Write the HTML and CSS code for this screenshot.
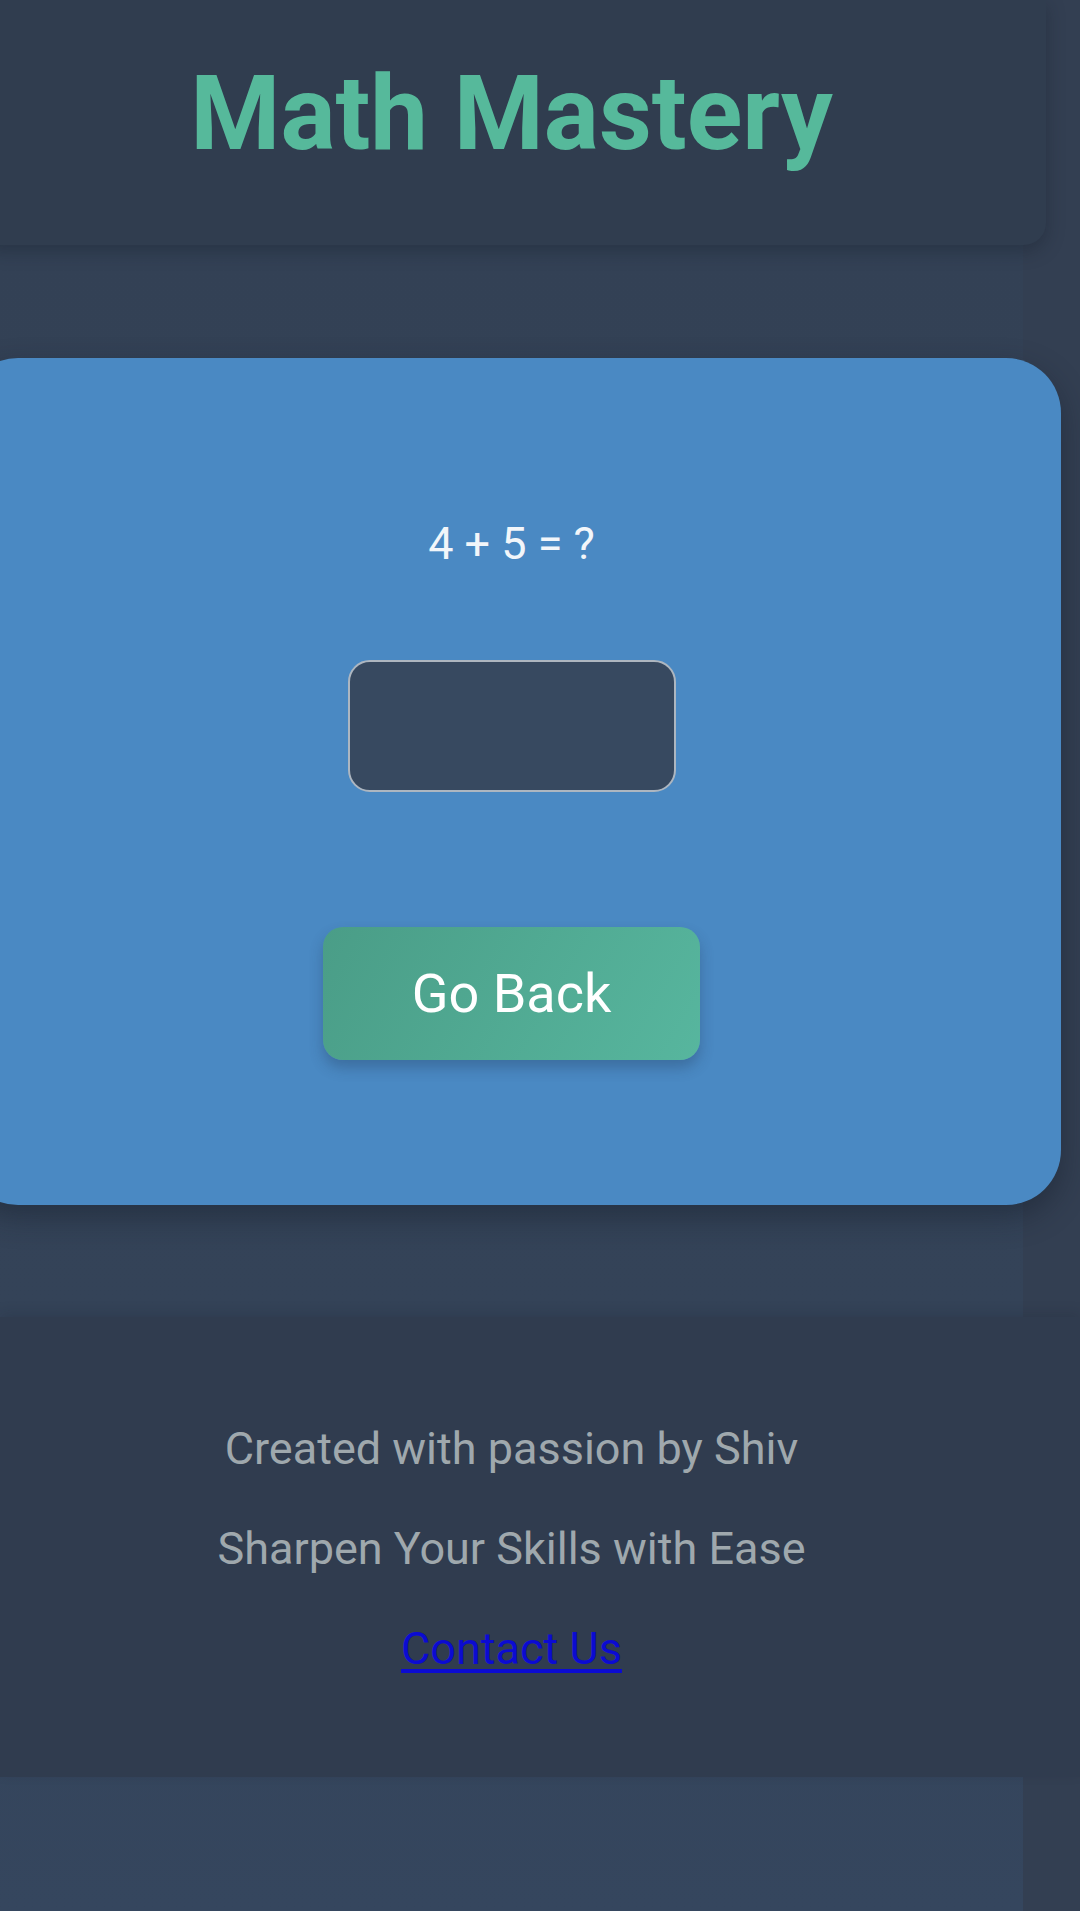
FILE: index.html
```html
<!DOCTYPE html>
<html lang="en">
<head>
<meta charset="utf-8">
<title>Math Mastery</title>
<link rel="stylesheet" href="styles.css">
</head>
<body>
<div class="page">
  <header class="site-header">
    <h1 class="title">Math Mastery</h1>
  </header>
  <main class="main">
    <section class="card">
      <p class="question">4 + 5 = ?</p>
      <input class="answer" type="text" aria-label="Answer">
      <button class="back-btn" type="button">Go Back</button>
    </section>
  </main>
  <footer class="site-footer">
    <p class="foot-line">Created with passion by Shiv</p>
    <p class="foot-line">Sharpen Your Skills with Ease</p>
    <p class="foot-line"><a class="contact" href="#">Contact Us</a></p>
  </footer>
</div>
</body>
</html>
```

FILE: styles.css
```css
html {
  margin: 0;
  background: #333f52;
}
body {
  margin: 0;
  min-height: 1911px;
  overflow: hidden;
  font-family: Roboto, "Liberation Sans", Arial, sans-serif;
  background: #333f52;
}
.page {
  width: 1023px;
  min-height: 1911px;
  display: flex;
  flex-direction: column;
  align-items: center;
  background: linear-gradient(180deg, #303c4e 0%, #334155 60%, #35465e 100%);
}
.site-header {
  width: 1068px;
  flex: none;
  box-sizing: border-box;
  height: 245px;
  padding-top: 53px;
  background: #303d4f;
  border-radius: 0 0 22px 22px;
  box-shadow: 0 6px 18px rgba(20, 28, 40, 0.35);
  text-align: center;
  position: relative;
  z-index: 2;
}
.title {
  margin: 0;
  font-size: 103px;
  line-height: 121px;
  font-weight: 700;
  color: #56b99b;
}
.main {
  width: 1023px;
  flex: none;
  display: flex;
  flex-direction: column;
  align-items: center;
  padding: 113px 0 112px;
  background: linear-gradient(180deg, #334155 0%, #344358 100%);
}
.card {
  width: 1098px;
  flex: none;
  box-sizing: border-box;
  height: 847px;
  padding-top: 159px;
  background: #4a89c3;
  border-radius: 55px;
  box-shadow: 0 12px 30px rgba(20, 28, 42, 0.45);
  display: flex;
  flex-direction: column;
  align-items: center;
}
.question {
  margin: 0;
  font-size: 45px;
  line-height: 53px;
  color: #f2f6fa;
}
.answer {
  margin-top: 90px;
  width: 328px;
  height: 132px;
  box-sizing: border-box;
  border: 2px solid #adb6c0;
  border-radius: 22px;
  background: #374960;
  outline: none;
  font-family: inherit;
  font-size: 45px;
  color: #fff;
  padding: 0 20px;
}
.back-btn {
  margin-top: 135px;
  width: 377px;
  height: 133px;
  border: none;
  border-radius: 20px;
  background: linear-gradient(120deg, #4a9d87 0%, #57b69e 100%);
  box-shadow: 0 8px 14px rgba(30, 50, 80, 0.3);
  color: #ffffff;
  font-family: inherit;
  font-size: 54px;
  cursor: pointer;
}
.site-footer {
  align-self: flex-start;
  width: 1080px;
  flex: none;
  box-sizing: border-box;
  height: 460px;
  padding: 59px 57px 0 0;
  background: #303c4f;
  text-align: center;
  box-shadow: 0 -4px 12px rgba(20, 28, 40, 0.15);
}
.foot-line {
  margin: 45px 0;
  font-size: 45px;
  line-height: 55px;
  color: #9fa8ad;
}
.contact {
  color: #0b0bd2;
  text-decoration: underline;
  text-decoration-thickness: 4px;
  text-underline-offset: 5px;
}
```
